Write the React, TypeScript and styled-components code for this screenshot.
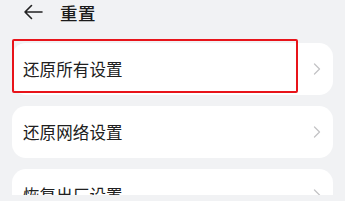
import React from "react";
import styled, { createGlobalStyle } from "styled-components";

const Global = createGlobalStyle`
  html, body { margin: 0; padding: 0; background: #f1f2f4; }
  body { font-family: "Noto Sans CJK SC", "Noto Sans", sans-serif; }
`;

const Page = styled.div`
  width: 345px;
  height: 201px;
  overflow: hidden;
  background: #f1f2f4;
  box-sizing: border-box;
  padding: 0 12px 0 12px;
  margin-top: -6px;
`;

const Header = styled.div`
  display: flex;
  align-items: center;
  height: 36px;
  padding-left: 11px;
  gap: 17px;
`;

const Title = styled.div`
  font-size: 17.5px;
  font-weight: 500;
  color: #1b1b1b;
  letter-spacing: 0.5px;
`;

const List = styled.div`
  display: flex;
  flex-direction: column;
  gap: 11px;
  margin-top: 13px;
`;

const Card = styled.div`
  position: relative;
  height: 52px;
  background: #ffffff;
  border-radius: 14px;
  display: flex;
  align-items: center;
  justify-content: space-between;
  padding: 0 12px 0 11px;
`;

const Label = styled.span`
  font-size: 16.5px;
  color: #202020;
  letter-spacing: 0.1px;
`;

const Highlight = styled.div`
  position: absolute;
  left: 0;
  top: -4px;
  width: 286px;
  height: 54px;
  box-sizing: border-box;
  border: 2px solid #e8141a;
  border-radius: 2px;
  pointer-events: none;
`;

const Back = () => (
  <svg width="20" height="16" viewBox="0 0 20 16" fill="none">
    <path d="M19 8H2M8.5 1.5L2 8l6.5 6.5" stroke="#222" strokeWidth="1.6" strokeLinecap="round" strokeLinejoin="round" />
  </svg>
);

const Chevron = () => (
  <svg width="8" height="12" viewBox="0 0 8 12" fill="none">
    <path d="M1.5 1l5 5-5 5" stroke="#c4c4c6" strokeWidth="1.3" strokeLinecap="round" strokeLinejoin="round" />
  </svg>
);

const items = ["还原所有设置", "还原网络设置", "恢复出厂设置"];

export default function App() {
  return (
    <>
      <Global />
      <Page>
        <Header>
          <Back />
          <Title>重置</Title>
        </Header>
        <List>
          {items.map((t, i) => (
            <Card key={t}>
              <Label>{t}</Label>
              <Chevron />
              {i === 0 && <Highlight />}
            </Card>
          ))}
        </List>
      </Page>
    </>
  );
}
